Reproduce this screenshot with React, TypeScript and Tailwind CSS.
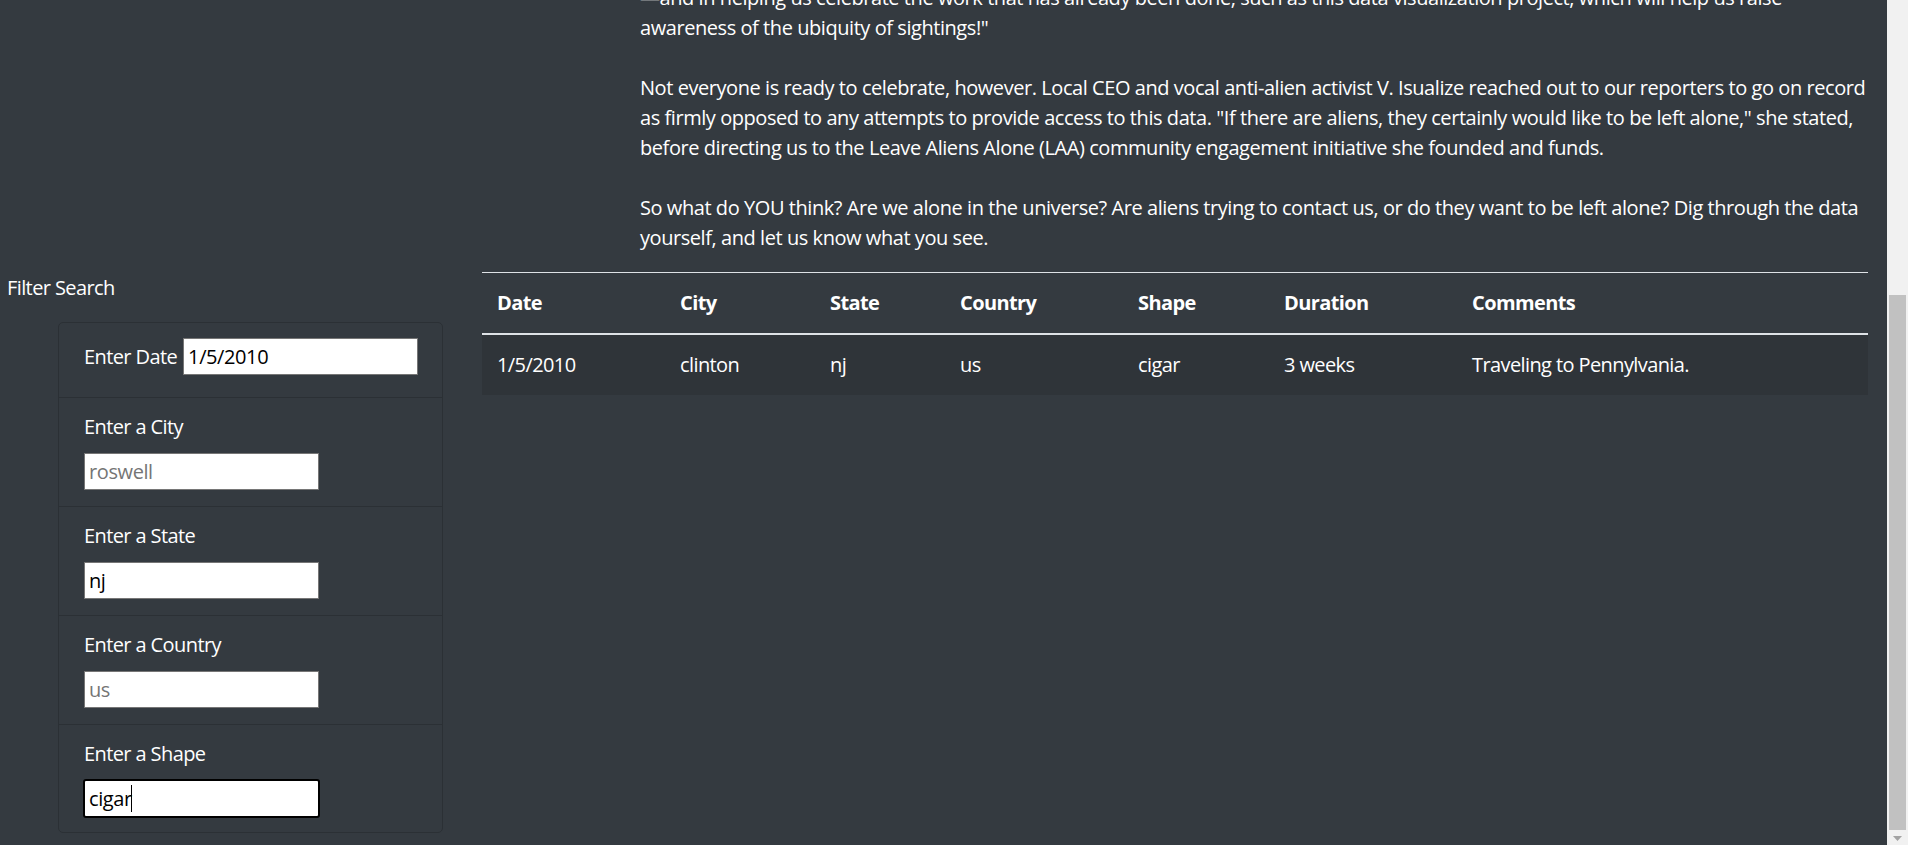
import React from "react";

const lines1 = [
  "\u2014and in helping us celebrate the work that has already been done, such as this data visualization project, which will help us raise",
  'awareness of the ubiquity of sightings!"',
];
const lines2 = [
  "Not everyone is ready to celebrate, however. Local CEO and vocal anti-alien activist V. Isualize reached out to our reporters to go on record",
  'as firmly opposed to any attempts to provide access to this data. "If there are aliens, they certainly would like to be left alone," she stated,',
  "before directing us to the Leave Aliens Alone (LAA) community engagement initiative she founded and funds.",
];
const lines3 = [
  "So what do YOU think? Are we alone in the universe? Are aliens trying to contact us, or do they want to be left alone? Dig through the data",
  "yourself, and let us know what you see.",
];

function Field({ label, placeholder, value }: { label: string; placeholder?: string; value?: string }) {
  return (
    <div className="flex flex-col items-start">
      <div className="whitespace-nowrap leading-[30px] tracking-[-0.03em]">{label}</div>
      <input
        readOnly
        defaultValue={value}
        placeholder={placeholder}
        className="mt-[11px] h-[37px] w-[235px] border border-[#767676] bg-white px-[4px] text-[20px] leading-[30px] tracking-[-0.02em] text-black outline-none placeholder:text-[#757575]"
      />
    </div>
  );
}

export default function App() {
  const cols = [
    { h: "Date", v: "1/5/2010", w: "w-[183px]" },
    { h: "City", v: "clinton", w: "w-[150px]" },
    { h: "State", v: "nj", w: "w-[130px]" },
    { h: "Country", v: "us", w: "w-[178px]" },
    { h: "Shape", v: "cigar", w: "w-[146px]" },
    { h: "Duration", v: "3 weeks", w: "w-[188px]" },
    { h: "Comments", v: "Traveling to Pennylvania.", w: "w-[411px]" },
  ];
  return (
    <div className="flex h-[845px] w-[1908px] overflow-hidden bg-[#343a40] font-['Open_Sans',sans-serif] text-[20px] text-white">
      <div className="w-[1887px] shrink-0">
        <div className="mt-[-17px]">
          <div className="ml-[640px] w-[1228px] leading-[30px] tracking-[-0.022em]">
            {lines1.map((l) => (
              <div key={l} className="whitespace-nowrap">{l}</div>
            ))}
            <div className="h-[30px]" />
            {lines2.map((l) => (
              <div key={l} className="whitespace-nowrap">{l}</div>
            ))}
            <div className="h-[30px]" />
            {lines3.map((l) => (
              <div key={l} className="whitespace-nowrap">{l}</div>
            ))}
          </div>
          <div className="mt-[19px] flex items-start">
            <div className="w-[482px] shrink-0">
              <div className="whitespace-nowrap pl-[7px] pt-[1px] leading-[30px] tracking-[-0.03em]">Filter Search</div>
              <div className="ml-[58px] mt-[19px] w-[385px] rounded-[5px] border border-[#2b3035]">
                <div className="border-b border-[#2b3035] px-[25px] pb-[22px] pt-[15px]">
                  <div className="flex items-center gap-[6px]">
                    <span className="shrink-0 whitespace-nowrap leading-[30px] tracking-[-0.03em]">Enter Date</span>
                    <input
                      readOnly
                      defaultValue="1/5/2010"
                      className="h-[37px] w-[235px] shrink-0 border border-[#767676] bg-white px-[4px] text-[20px] leading-[30px] tracking-[-0.02em] text-black outline-none"
                    />
                  </div>
                </div>
                <div className="border-b border-[#2b3035] px-[25px] pb-[16px] pt-[14px]">
                  <Field label="Enter a City" placeholder="roswell" />
                </div>
                <div className="border-b border-[#2b3035] px-[25px] pb-[16px] pt-[14px]">
                  <Field label="Enter a State" value="nj" />
                </div>
                <div className="border-b border-[#2b3035] px-[25px] pb-[16px] pt-[14px]">
                  <Field label="Enter a Country" placeholder="us" />
                </div>
                <div className="px-[25px] pb-[14px] pt-[14px]">
                  <div className="flex flex-col items-start">
                    <div className="whitespace-nowrap leading-[30px] tracking-[-0.03em]">Enter a Shape</div>
                    <div className="relative mt-[10px] ml-[-1px]">
                      <input
                        readOnly
                        defaultValue="cigar"
                        className="h-[39px] w-[237px] rounded-[3px] border-2 border-black bg-white px-[4px] text-[20px] leading-[30px] tracking-[-0.02em] text-black outline-none"
                      />
                      <span className="absolute left-[48px] top-[6px] h-[27px] w-[1px] bg-black" />
                    </div>
                  </div>
                </div>
              </div>
            </div>
            <table className="w-[1386px] table-fixed border-separate border-spacing-0">
              <thead>
                <tr>
                  {cols.map((c) => (
                    <th
                      key={c.h}
                      className={`${c.w} border-b-2 border-t border-b-[#dee2e6] border-t-[#dee2e6] px-[15px] py-[15px] text-left font-bold leading-[30px] tracking-[-0.03em]`}
                    >
                      {c.h}
                    </th>
                  ))}
                </tr>
              </thead>
              <tbody>
                <tr className="bg-[#2f3439]">
                  {cols.map((c) => (
                    <td key={c.h} className="px-[15px] py-[15px] text-left leading-[30px] tracking-[-0.03em]">
                      {c.v}
                    </td>
                  ))}
                </tr>
              </tbody>
            </table>
          </div>
        </div>
      </div>
      <div className="flex w-[21px] shrink-0 flex-col items-center bg-[#f1f1f1]">
        <div className="mt-[295px] h-[535px] w-[17px] bg-[#c1c1c1]" />
        <svg width="9" height="5" viewBox="0 0 9 5" className="mt-[6px]">
          <polygon points="0,0 9,0 4.5,5" fill="#a3a3a3" />
        </svg>
      </div>
    </div>
  );
}
